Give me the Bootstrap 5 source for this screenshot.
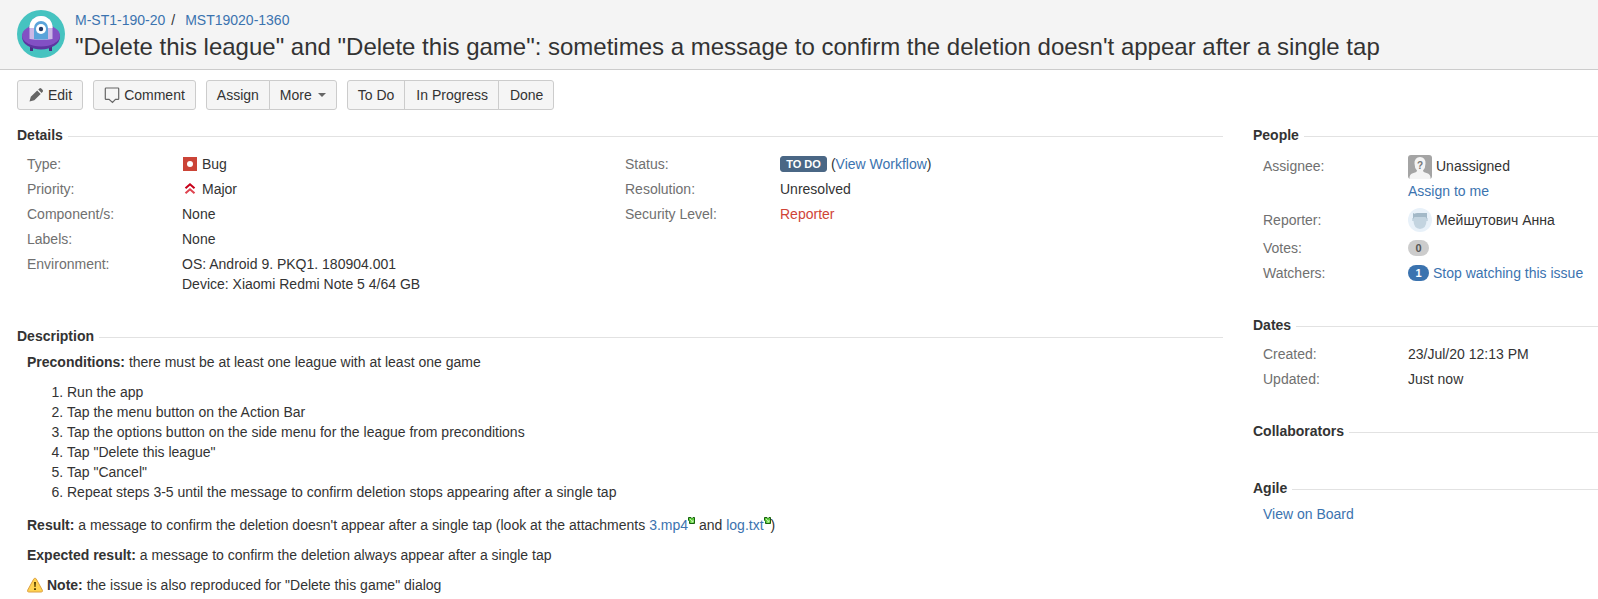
<!DOCTYPE html>
<html lang="en">
<head>
<meta charset="utf-8">
<title>MST19020-1360</title>
<link href="https://cdn.jsdelivr.net/npm/bootstrap@5.3.0/dist/css/bootstrap.min.css" rel="stylesheet">
<style>
body{font:14px/20px "Liberation Sans",Arial,sans-serif;color:#333;background:#fff;overflow:hidden}
a{color:#3b73af;text-decoration:none}
svg{flex:none}
.issue-head{height:70px;background:#f4f4f4;border-bottom:1px solid #ccc;padding:10px 17px 0}
.issue-head h1{font-size:24px;line-height:30px;margin:2px 0 0;font-weight:400;white-space:nowrap}
.crumb-sep{padding:0 10px 0 6px}
.toolbar{padding:10px 17px 0;gap:10px}
.toolbar .btn{--bs-btn-font-size:14px;--bs-btn-line-height:20px;--bs-btn-padding-x:10px;--bs-btn-padding-y:4px;--bs-btn-color:#333;--bs-btn-bg:#f5f5f5;--bs-btn-border-color:#ccc;--bs-btn-border-radius:3px;height:30px;white-space:nowrap;display:flex;align-items:center;flex:none}
.toolbar .transitions .btn + .btn{padding-left:11px}
.main-col{width:1206px;margin-left:17px}
.side-col{width:345px}
.module-title{display:flex;align-items:center;font-size:14px;line-height:20px;font-weight:700;margin:0;gap:5px}
.module-title::after{content:"";flex:1;height:1px;background:#e2e2e2;position:relative;top:1px}
.field{display:flex;margin-bottom:5px;white-space:nowrap}
.field dt{font-weight:400;color:#707070;flex:none;width:155px}
.field dd{margin:0}
.side-col .field dt{width:145px}
.fields{padding-left:10px;margin:0}
.status-tag{display:inline-block;background:#4a6785;color:#fff;font-size:11px;font-weight:700;line-height:14px;height:16px;border:1px solid #4a6785;border-radius:3px;padding:0 5px;width:47px;text-align:center;vertical-align:1px}
.pill{display:inline-block;width:21px;height:16px;border-radius:8px;font-size:11px;line-height:16px;font-weight:700;text-align:center;flex:none}
.pill-votes{background:#ccc;color:#555}
.pill-watch{background:#3b73af;color:#fff}
.desc{padding-left:10px}
.desc p{margin:0 0 10px}
.desc ol{margin:0 0 13px;padding-left:40px}
.ext{vertical-align:6px}
</style>
</head>
<body>
<svg width="0" height="0" class="position-absolute"><defs>
<g id="ext"><path d="M.5.500H3l1 1L5 .5h1.500v6h-5V4.500L.5 3z" fill="#5fce3c" stroke="#17600f"/><path d="M2 2l3 3M5 3v2H3" stroke="#c9f5b5" stroke-width=".9" fill="none"/></g>
</defs></svg>
<header class="issue-head d-flex">
  <svg width="48" height="48" viewBox="0 0 48 48"><circle cx="24" cy="24" r="24" fill="#46c3c0"/><path d="M13 34h3v7h-3zM32 34h3v7h-3z" fill="#4a2d82"/><ellipse cx="24" cy="27" rx="19" ry="12.500" fill="#5d35a0"/><ellipse cx="24" cy="25.500" rx="19" ry="11" fill="#8250c4"/><path d="M12.500 29V17.500a11.500 11.500 0 0 1 23 0V29q-11.500 2-23 0z" fill="#cbb8e6"/><path d="M12.500 18v-.5a11.500 11.500 0 0 1 23 0v.5z" fill="#fff"/><path d="M17 29V18a7 7 0 0 1 14 0v11q-7 1-14 0z" fill="#5aa4da"/><circle cx="24" cy="19" r="5" fill="#fff"/><circle cx="24" cy="19" r="2.200" fill="#243b67"/></svg>
  <div style="margin-left:10px">
    <nav><a href="#">M-ST1-190-20</a><span class="crumb-sep">/</span><a href="#">MST19020-1360</a></nav>
    <h1>"Delete this league" and "Delete this game": sometimes a message to confirm the deletion doesn't appear after a single tap</h1>
  </div>
</header>
<div class="toolbar d-flex">
  <button class="btn"><svg width="16" height="16" viewBox="0 0 16 16" class="me-1"><path d="M1.500 14.500l1.300-4.700L9.200 3.400l3.500 3.500L6.300 13.200zM10.200 2.500l1.200-1.100q1-.8 1.900 0l1.400 1.500q.8.900 0 1.800l-1.100 1.200z" fill="#666"/></svg>Edit</button>
  <button class="btn"><svg width="16" height="18" viewBox="0 0 16 18" class="me-1"><path d="M2 2h12q.7 0 .7.700v10q0 .7-.7.700h-2.500L8.500 16.500 5 13.400H2q-.7 0-.7-.7v-10Q1.300 2 2 2z" fill="none" stroke="#666" stroke-width="1.200"/></svg>Comment</button>
  <div class="btn-group"><button class="btn">Assign</button><button class="btn">More<svg width="8" height="4" viewBox="0 0 8 4" style="margin-left:6px"><path d="M0 0h8L4 4z" fill="#666"/></svg></button></div>
  <div class="btn-group transitions"><button class="btn">To Do</button><button class="btn">In Progress</button><button class="btn">Done</button></div>
</div>
<div class="d-flex" style="gap:30px;padding-top:15px">
<main class="main-col">
  <section style="height:201px">
    <h2 class="module-title">Details</h2>
    <div class="d-flex" style="padding-top:9px">
      <dl class="fields" style="width:608px">
        <div class="field"><dt>Type:</dt><dd class="d-flex align-items-center"><svg width="16" height="16" class="me-1"><path d="M1 1h14v14H1z" fill="#cb4437"/><circle cx="8" cy="8" r="3" fill="#fff"/></svg>Bug</dd></div>
        <div class="field"><dt>Priority:</dt><dd class="d-flex align-items-center"><svg width="16" height="16" class="me-1" fill="none" stroke-width="2.100"><path d="M3.500 7.300L8 3.300l4.500 4" stroke="#c8001a"/><path d="M3.500 12.300L8 8.300l4.500 4" stroke="#df4450"/></svg>Major</dd></div>
        <div class="field"><dt>Component/s:</dt><dd>None</dd></div>
        <div class="field"><dt>Labels:</dt><dd>None</dd></div>
        <div class="field"><dt>Environment:</dt><dd>OS: Android 9. PKQ1. 180904.001<br>Device: Xiaomi Redmi Note 5 4/64 GB</dd></div>
      </dl>
      <dl class="fields" style="padding-left:0">
        <div class="field"><dt>Status:</dt><dd><span class="status-tag">TO DO</span> (<a href="#">View Workflow</a>)</dd></div>
        <div class="field"><dt>Resolution:</dt><dd>Unresolved</dd></div>
        <div class="field"><dt>Security Level:</dt><dd style="color:#d04437">Reporter</dd></div>
      </dl>
    </div>
  </section>
  <section>
    <h2 class="module-title">Description</h2>
    <div class="desc" style="padding-top:6px">
      <p><b>Preconditions:</b> there must be at least one league with at least one game</p>
      <ol>
        <li>Run the app</li>
        <li>Tap the menu button on the Action Bar</li>
        <li>Tap the options button on the side menu for the league from preconditions</li>
        <li>Tap "Delete this league"</li>
        <li>Tap "Cancel"</li>
        <li>Repeat steps 3-5 until the message to confirm deletion stops appearing after a single tap</li>
      </ol>
      <p><b>Result:</b> a message to confirm the deletion doesn't appear after a single tap (look at the attachments <a href="#">3.mp4<svg class="ext" width="7" height="7"><use href="#ext"/></svg></a> and <a href="#">log.txt<svg class="ext" width="7" height="7"><use href="#ext"/></svg></a>)</p>
      <p><b>Expected result:</b> a message to confirm the deletion always appear after a single tap</p>
      <p class="d-flex align-items-center"><svg width="16" height="16" class="me-1"><path d="M8 1.200q.8 0 1.300.9l6 11q.7 1.800-1 1.900H1.700Q0 14.900.7 13.100l6-11Q7.200 1.200 8 1.200z" fill="#ffd351" stroke="#dca044"/><path d="M7 5h2l-.4 5H7.400zM7 11.300h2v1.800H7z" fill="#594300"/></svg><span><b>Note:</b> the issue is also reproduced for "Delete this game" dialog</span></p>
    </div>
  </section>
</main>
<aside class="side-col">
  <section style="height:190px">
    <h2 class="module-title">People</h2>
    <dl class="fields" style="padding-top:9px">
      <div class="field mb-0"><dt style="padding-top:2px">Assignee:</dt><dd><div class="d-flex" style="height:24px;margin-top:1px;line-height:22px"><svg width="24" height="24" style="margin-right:4px"><rect width="24" height="24" rx="3" fill="#a4a4a4"/><path d="M1.500 24q-.5-5 4-6 3.500-.8 3.500-2.500Q6.500 13 6.500 8.500 6.500 2 12 2t5.500 6.500q0 4.500-2.500 7 0 1.700 3.500 2.500 4.500 1 4 6z" fill="#f4f4f4"/><text x="12" y="13.500" text-anchor="middle" font-size="10" font-weight="700" fill="#777">?</text></svg>Unassigned</div><a href="#" class="d-block" style="padding-top:2px">Assign to me</a></dd></div>
      <div class="field" style="margin:7px 0 5px"><dt style="padding-top:2px">Reporter:</dt><dd class="d-flex" style="height:25px;line-height:24px"><svg width="24" height="24" style="margin-right:4px"><circle cx="12" cy="12" r="12" fill="#e8f1f9"/><path d="M4.200 10h1.300V7h13v3h1.300v3h-1.300q-.3 7.500-6.500 8-6.200-.5-6.500-8H4.200z" fill="#c3d4e0"/><path d="M5 5l1.500.7Q7.500 5 9.500 5H19v6l-1.500-2H6.500L5 11z" fill="#a3b9c8"/></svg>Мейшутович Анна</dd></div>
      <div class="field"><dt>Votes:</dt><dd class="d-flex align-items-center"><span class="pill pill-votes">0</span></dd></div>
      <div class="field"><dt>Watchers:</dt><dd class="d-flex align-items-center"><span class="pill pill-watch">1</span><a href="#" class="ms-1">Stop watching this issue</a></dd></div>
    </dl>
  </section>
  <section style="height:106px">
    <h2 class="module-title">Dates</h2>
    <dl class="fields" style="padding-top:9px">
      <div class="field"><dt>Created:</dt><dd>23/Jul/20 12:13 PM</dd></div>
      <div class="field"><dt>Updated:</dt><dd>Just now</dd></div>
    </dl>
  </section>
  <section style="height:57px"><h2 class="module-title">Collaborators</h2></section>
  <section><h2 class="module-title">Agile</h2><div class="fields" style="padding-top:6px"><a href="#">View on Board</a></div></section>
</aside>
</div>
<script src="https://cdn.jsdelivr.net/npm/bootstrap@5.3.0/dist/js/bootstrap.bundle.min.js"></script>
</body>
</html>
